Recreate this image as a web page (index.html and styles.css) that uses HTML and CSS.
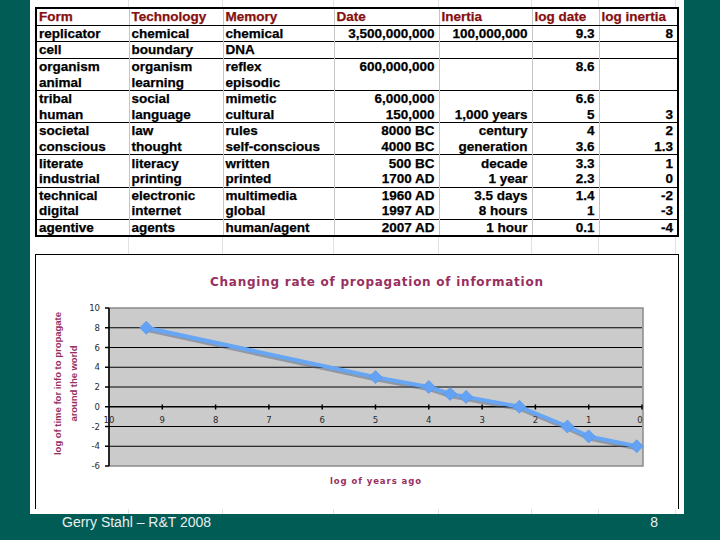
FILE: index.html
```html
<!DOCTYPE html>
<html>
<head>
<meta charset="utf-8">
<link rel="stylesheet" href="styles.css">
</head>
<body>
<div class="sheet">
  <table class="grid">
    <colgroup>
      <col class="c1"><col class="c2"><col class="c3"><col class="c4"><col class="c5"><col class="c6"><col class="c7">
    </colgroup>
    <thead>
      <tr class="head"><th>Form</th><th>Technology</th><th>Memory</th><th>Date</th><th>Inertia</th><th>log date</th><th>log inertia</th></tr>
    </thead>
    <tbody>
      <tr class="grp"><td>replicator</td><td>chemical</td><td>chemical</td><td class="num">3,500,000,000</td><td class="num">100,000,000</td><td class="num">9.3</td><td class="num">8</td></tr>
      <tr class="grp"><td>cell</td><td>boundary</td><td>DNA</td><td></td><td></td><td></td><td></td></tr>
      <tr class="grp"><td>organism</td><td>organism</td><td>reflex</td><td class="num">600,000,000</td><td></td><td class="num">8.6</td><td></td></tr>
      <tr><td>animal</td><td>learning</td><td>episodic</td><td></td><td></td><td></td><td></td></tr>
      <tr class="grp"><td>tribal</td><td>social</td><td>mimetic</td><td class="num">6,000,000</td><td></td><td class="num">6.6</td><td></td></tr>
      <tr><td>human</td><td>language</td><td>cultural</td><td class="num">150,000</td><td class="num">1,000 years</td><td class="num">5</td><td class="num">3</td></tr>
      <tr class="grp"><td>societal</td><td>law</td><td>rules</td><td class="num">8000 BC</td><td class="num">century</td><td class="num">4</td><td class="num">2</td></tr>
      <tr><td>conscious</td><td>thought</td><td>self-conscious</td><td class="num">4000 BC</td><td class="num">generation</td><td class="num">3.6</td><td class="num">1.3</td></tr>
      <tr class="grp"><td>literate</td><td>literacy</td><td>written</td><td class="num">500 BC</td><td class="num">decade</td><td class="num">3.3</td><td class="num">1</td></tr>
      <tr><td>industrial</td><td>printing</td><td>printed</td><td class="num">1700 AD</td><td class="num">1 year</td><td class="num">2.3</td><td class="num">0</td></tr>
      <tr class="grp"><td>technical</td><td>electronic</td><td>multimedia</td><td class="num">1960 AD</td><td class="num">3.5 days</td><td class="num">1.4</td><td class="num">-2</td></tr>
      <tr><td>digital</td><td>internet</td><td>global</td><td class="num">1997 AD</td><td class="num">8 hours</td><td class="num">1</td><td class="num">-3</td></tr>
      <tr class="grp"><td>agentive</td><td>agents</td><td>human/agent</td><td class="num">2007 AD</td><td class="num">1 hour</td><td class="num">0.1</td><td class="num">-4</td></tr>
    </tbody>
  </table>

  <div class="chart">
    <svg class="plot" width="642" height="254" viewBox="0 0 642 254" xmlns="http://www.w3.org/2000/svg">
      <text class="title" x="340.5" y="31" text-anchor="middle" textLength="333" lengthAdjust="spacing">Changing rate of propagation of information</text>

      <rect x="73" y="53" width="534" height="158" fill="#cbcbcb" stroke="#8a8a8a" stroke-width="1.5"/>
      <g stroke="#000" stroke-width="1">
        <line x1="73" y1="72.75" x2="606" y2="72.75"/>
        <line x1="73" y1="92.5" x2="606" y2="92.5"/>
        <line x1="73" y1="112.25" x2="606" y2="112.25"/>
        <line x1="73" y1="132" x2="606" y2="132"/>
        <line x1="73" y1="151.75" x2="606" y2="151.75" stroke-width="1.5"/>
        <line x1="73" y1="171.5" x2="606" y2="171.5"/>
        <line x1="73" y1="191.25" x2="606" y2="191.25"/>
        <line x1="73" y1="53" x2="73" y2="211" stroke-width="1.5"/>
      </g>
      <g stroke="#000" stroke-width="1.5">
        <line x1="69" y1="53" x2="73" y2="53"/>
        <line x1="69" y1="72.75" x2="73" y2="72.75"/>
        <line x1="69" y1="92.5" x2="73" y2="92.5"/>
        <line x1="69" y1="112.25" x2="73" y2="112.25"/>
        <line x1="69" y1="132" x2="73" y2="132"/>
        <line x1="69" y1="151.75" x2="73" y2="151.75"/>
        <line x1="69" y1="171.5" x2="73" y2="171.5"/>
        <line x1="69" y1="191.25" x2="73" y2="191.25"/>
        <line x1="69" y1="211" x2="73" y2="211"/>
        <line x1="126.3" y1="149.5" x2="126.3" y2="154.5"/>
        <line x1="179.6" y1="149.5" x2="179.6" y2="154.5"/>
        <line x1="232.9" y1="149.5" x2="232.9" y2="154.5"/>
        <line x1="286.2" y1="149.5" x2="286.2" y2="154.5"/>
        <line x1="339.5" y1="149.5" x2="339.5" y2="154.5"/>
        <line x1="392.8" y1="149.5" x2="392.8" y2="154.5"/>
        <line x1="446.1" y1="149.5" x2="446.1" y2="154.5"/>
        <line x1="499.4" y1="149.5" x2="499.4" y2="154.5"/>
        <line x1="552.7" y1="149.5" x2="552.7" y2="154.5"/>
        <line x1="606" y1="149.5" x2="606" y2="154.5"/>
      </g>

      <g class="ticklabel" text-anchor="end">
        <text x="64" y="56">10</text>
        <text x="64" y="75.75">8</text>
        <text x="64" y="95.5">6</text>
        <text x="64" y="115.25">4</text>
        <text x="64" y="135">2</text>
        <text x="64" y="154.75">0</text>
        <text x="64" y="174.5">-2</text>
        <text x="64" y="194.25">-4</text>
        <text x="64" y="214">-6</text>
      </g>
      <g class="ticklabel" text-anchor="middle">
        <text x="73" y="167.5">10</text>
        <text x="126.3" y="167.5">9</text>
        <text x="179.6" y="167.5">8</text>
        <text x="232.9" y="167.5">7</text>
        <text x="286.2" y="167.5">6</text>
        <text x="339.5" y="167.5">5</text>
        <text x="392.8" y="167.5">4</text>
        <text x="446.1" y="167.5">3</text>
        <text x="499.4" y="167.5">2</text>
        <text x="552.7" y="167.5">1</text>
        <text x="604" y="167.5">0</text>
      </g>

      <g transform="translate(1.2 2.4)" opacity="0.45">
        <polyline points="110.3,72.75 339.5,122.1 392.8,132 414.1,138.9 430.1,141.9 483.4,151.75 531.4,171.5 552.7,181.4 600.7,191.25" fill="none" stroke="#4a5a78" stroke-width="4" stroke-linejoin="round"/>
      </g>
      <polyline points="110.3,72.75 339.5,122.1 392.8,132 414.1,138.9 430.1,141.9 483.4,151.75 531.4,171.5 552.7,181.4 600.7,191.25" fill="none" stroke="#66a6f4" stroke-width="4" stroke-linejoin="round"/>
      <g fill="#63a2f4" stroke="#5b98e6" stroke-width="0.8">
        <polygon points="110.3,66.25 116.8,72.75 110.3,79.25 103.8,72.75"/>
        <polygon points="339.5,115.6 346,122.1 339.5,128.6 333,122.1"/>
        <polygon points="392.8,125.5 399.3,132 392.8,138.5 386.3,132"/>
        <polygon points="414.1,132.4 420.6,138.9 414.1,145.4 407.6,138.9"/>
        <polygon points="430.1,135.4 436.6,141.9 430.1,148.4 423.6,141.9"/>
        <polygon points="483.4,145.25 489.9,151.75 483.4,158.25 476.9,151.75"/>
        <polygon points="531.4,165 537.9,171.5 531.4,178 524.9,171.5"/>
        <polygon points="552.7,174.9 559.2,181.4 552.7,187.9 546.2,181.4"/>
        <polygon points="600.7,184.75 607.2,191.25 600.7,197.75 594.2,191.25"/>
      </g>

      <text class="axistitle" x="339.5" y="229" text-anchor="middle" textLength="91" lengthAdjust="spacing">log of years ago</text>
      <text class="ytitle" transform="translate(25 128.5) rotate(-90)" text-anchor="middle" textLength="143" lengthAdjust="spacing">log of time for info to propagate</text>
      <text class="ytitle" transform="translate(40.5 128.5) rotate(-90)" text-anchor="middle" textLength="76" lengthAdjust="spacing">around the world</text>
    </svg>
  </div>
</div>
<div class="footer">
  <span>Gerry Stahl – R&amp;T 2008</span>
  <span>8</span>
</div>
</body>
</html>
```

FILE: styles.css
```css
html, body {
  margin: 0;
  padding: 0;
}

body {
  width: 720px;
  height: 540px;
  overflow: hidden;
  background: #015c56;
  font-family: "Liberation Sans", Arial, sans-serif;
}

.sheet {
  box-sizing: border-box;
  margin-left: 30px;
  width: 654px;
  height: 514px;
  padding: 7px 0 0 5px;
  display: flex;
  flex-direction: column;
  gap: 17px;
  background-color: #fff;
  background-image:
    linear-gradient(to right, transparent 98px, #e2e2e2 98px, #e2e2e2 99px, transparent 99px),
    linear-gradient(to right, transparent 192px, #e2e2e2 192px, #e2e2e2 193px, transparent 193px),
    linear-gradient(to right, transparent 303px, #e2e2e2 303px, #e2e2e2 304px, transparent 304px),
    linear-gradient(to right, transparent 408px, #e2e2e2 408px, #e2e2e2 409px, transparent 409px),
    linear-gradient(to right, transparent 501px, #e2e2e2 501px, #e2e2e2 502px, transparent 502px),
    linear-gradient(to right, transparent 568px, #e2e2e2 568px, #e2e2e2 569px, transparent 569px),
    linear-gradient(to right, transparent 645px, #e2e2e2 645px, #e2e2e2 646px, transparent 646px),
    linear-gradient(to bottom, transparent 16px, #e6e6e6 16px);
  background-size: 100% 100%, 100% 100%, 100% 100%, 100% 100%, 100% 100%, 100% 100%, 100% 100%, 100% 16.45px;
  background-position: 0 0, 0 0, 0 0, 0 0, 0 0, 0 0, 0 0, 0 7px;
}

.grid {
  border-collapse: collapse;
  table-layout: fixed;
  width: 642px;
  border: 2px solid #000;
  background: #fff;
  font-size: 13.5px;
  font-weight: bold;
  color: #000;
  -webkit-text-stroke: 0.25px currentColor;
}

.c1 { width: 93px; }
.c2 { width: 94px; }
.c3 { width: 111px; }
.c4 { width: 105px; }
.c5 { width: 93px; }
.c6 { width: 67px; }
.c7 { width: 79px; }

.grid th,
.grid td {
  height: 15.6px;
  padding: 0 3px 0 2px;
  line-height: 15px;
  white-space: nowrap;
  overflow: hidden;
  border-left: 1px solid #c4c4c4;
  border-right: 1px solid #c4c4c4;
  text-align: left;
}

.grid th {
  color: #86100f;
  font-weight: bold;
  border-bottom: 1px solid #000;
}

.grid tr.grp td {
  border-top: 1px solid #000;
}

.grid td.num {
  text-align: right;
  padding-right: 4px;
}

.chart {
  box-sizing: border-box;
  width: 644px;
  height: 255px;
  border: 1px solid #000;
  border-bottom: none;
  background: #fff;
}

.plot {
  display: block;
}

.title {
  font-family: "DejaVu Sans", Verdana, sans-serif;
  font-weight: bold;
  font-size: 12px;
  fill: #97305f;
}

.ticklabel {
  font-family: "DejaVu Sans", Verdana, sans-serif;
  font-size: 8.5px;
  fill: #2a2a2a;
}

.axistitle {
  font-family: "DejaVu Sans", Verdana, sans-serif;
  font-weight: bold;
  font-size: 8.5px;
  fill: #97305f;
}

.ytitle {
  font-family: "Liberation Sans", Arial, sans-serif;
  font-weight: bold;
  font-size: 9.5px;
  fill: #97305f;
}

.footer {
  display: flex;
  justify-content: space-between;
  height: 26px;
  padding: 0 62px;
  color: #e8eeee;
  font-size: 14px;
  line-height: 16px;
}
```
